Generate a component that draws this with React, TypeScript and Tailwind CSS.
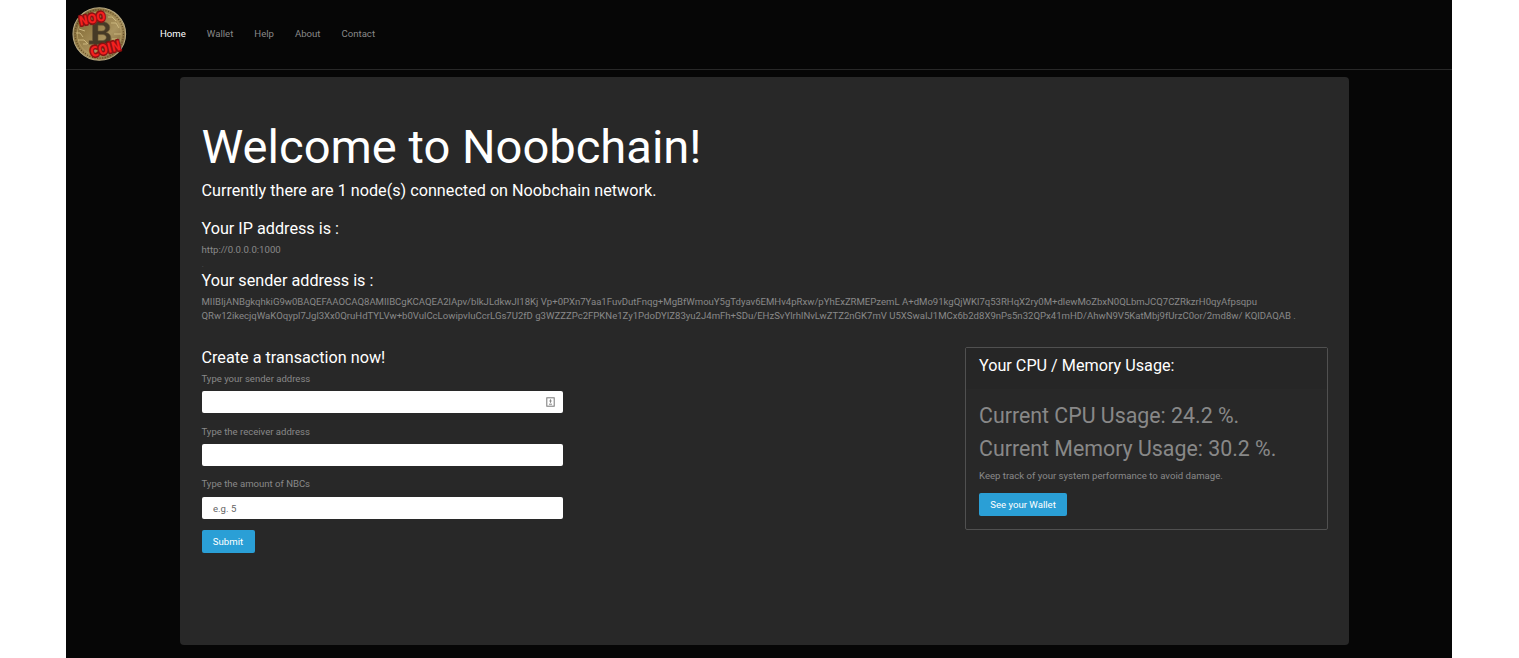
import React from "react";

const links = ["Home", "Wallet", "Help", "About", "Contact"];

function Logo() {
  return (
    <svg width="56" height="56" viewBox="0 0 56 56" overflow="visible" className="block">
      <defs>
        <linearGradient id="coin" x1="0" y1="0" x2="1" y2="1">
          <stop offset="0" stopColor="#6f5a33" />
          <stop offset="0.35" stopColor="#937b45" />
          <stop offset="0.6" stopColor="#aa9460" />
          <stop offset="1" stopColor="#6d5128" />
        </linearGradient>
      </defs>
      <circle cx="28.300" cy="28" r="26.300" fill="url(#coin)" stroke="#b9aa82" strokeWidth="1.1" />
      <circle cx="28.300" cy="28" r="22" fill="none" stroke="#b8a066" strokeWidth="0.8" />
      <circle cx="28.300" cy="28" r="24.2" fill="none" stroke="#5f4923" strokeWidth="1.2" strokeDasharray="1 1.6" />
      <path d="M5 27h4l3 4M7 34h6l4 4M40 17h5l3 5M43 28h7M41 33h5M12 38h4M37 11h4l4 4M8 23l6 2" fill="none" stroke="#cfbb82" strokeWidth="0.9" />
      <path
        transform="translate(1 -0.500)"
        d="M18 16h4v-4h3.500v4h2.500v-4h3.500v4.200c4 .8 6.300 2.800 6.300 5.900 0 2.400-1.300 4-3.600 4.900 3 .8 4.600 2.800 4.600 5.500 0 3.700-2.600 5.800-7.300 6.200V43H28v-4.300h-2.500V43H22v-4.300h-5v-3.500h3.500V19.500H18zM26 19.700v5.800h4c4.400 0 4.400-5.800 0-5.800zM26 29v6h4.500c5 0 5-6 0-6z"
        fill="#463a26"
        stroke="#6d5b37"
        strokeWidth="0.6"
        fillRule="evenodd"
      />
      <g
        fontFamily="'DejaVu Sans', sans-serif"
        fontWeight="700"
        fill="#f52020"
        stroke="#8d1010"
        strokeWidth="2.600"
        paintOrder="stroke"
        strokeLinejoin="round"
        textAnchor="middle"
      >
        <text fontSize="10.500" transform="translate(22 17) rotate(-12) scale(1 1.200)">NOO</text>
        <text fontSize="11" transform="translate(35.500 47.500) rotate(-14) scale(1 1.250)">COIN</text>
      </g>
    </svg>
  );
}

function Field({ label, placeholder, icon, gap, inputGap }: { label: string; placeholder?: string; icon?: boolean; gap: string; inputGap: string }) {
  return (
    <label className={`block ${gap}`}>
      <span className="block h-[14px] text-[9.55px] leading-[14px]">{label}</span>
      <span className={`relative ml-[0.5px] block h-[22px] w-[361px] ${inputGap}`}>
        <input
          placeholder={placeholder}
          className="block h-full w-full rounded-[2px] bg-white px-[11px] text-[9.6px] text-[#282828] outline-none placeholder:text-[#666]"
        />
        {icon && (
          <svg className="absolute top-[6px] right-[8px]" width="9" height="10" viewBox="0 0 9 10" fill="none">
            <rect x="0.8" y="0.8" width="7.400" height="8.400" stroke="#777" strokeWidth="1" />
            <path d="M4.500 2.300v3.500M3.300 4h2.400M3 7.200h3" stroke="#888" strokeWidth="1" />
          </svg>
        )}
      </span>
    </label>
  );
}

export default function App() {
  return (
    <div className="h-[658px] overflow-hidden bg-white pl-[66px] font-['Roboto',sans-serif] text-[9.6px] text-[#888]">
      <div className="h-full w-[1386px] bg-[#060606]">
        <nav className="flex h-[70px] items-center border-b border-[#282828] pb-[1px] pl-[5px]">
          <Logo />
          <div className="ml-[33px] flex gap-[21px] text-[9.6px] leading-[14px]">
            {links.map((l) => (
              <a key={l} className={l === "Home" ? "text-white" : ""}>{l}</a>
            ))}
          </div>
        </nav>
        <main className="mt-[7px] ml-[114px] h-[568px] w-[1169px] rounded-[4px] bg-[#282828] pr-[21px] pl-[21.5px] pt-[40px]">
          <h1 className="h-[60px] text-[47.1px] leading-[59px] text-white">Welcome to Noobchain!</h1>
          <h4 className="mt-[4px] h-[20px] text-[16.2px] leading-[20px] text-white">
            Currently there are 1 node(s) connected on Noobchain network.
          </h4>
          <h4 className="mt-[18px] h-[20px] text-[16.2px] leading-[20px] text-white">Your IP address is :</h4>
          <p className="mt-[4px] h-[14px] leading-[14px]">http://0.0.0.0:1000</p>
          <p className="h-[14px] leading-[14px] text-[#4c4c4c]">.</p>
          <h4 className="h-[20px] text-[16.2px] leading-[20px] text-white">Your sender address is :</h4>
          <p className="mt-[4px] h-[27px] text-[9.577px] leading-[13.500px] whitespace-nowrap">
            MIIBIjANBgkqhkiG9w0BAQEFAAOCAQ8AMIIBCgKCAQEA2lApv/blkJLdkwJI18Kj Vp+0PXn7Yaa1FuvDutFnqg+MgBfWmouY5gTdyav6EMHv4pRxw/pYhExZRMEPzemL A+dMo91kgQjWKl7q53RHqX2ry0M+dlewMoZbxN0QLbmJCQ7CZRkzrH0qyAfpsqpu
            <br />
            QRw12ikecjqWaKOqypl7Jgl3Xx0QruHdTYLVw+b0VulCcLowipvIuCcrLGs7U2fD g3WZZZPc2FPKNe1Zy1PdoDYIZ83yu2J4mFh+SDu/EHzSvYlrhlNvLwZTZ2nGK7mV U5XSwaIJ1MCx6b2d8X9nPs5n32QPx41mHD/AhwN9V5KatMbj9fUrzC0or/2md8w/ KQIDAQAB .
          </p>
          <div className="mt-[25px] flex justify-between">
            <form>
              <h4 className="h-[20px] text-[16.2px] leading-[21px] text-white">Create a transaction now!</h4>
              <Field label="Type your sender address" icon gap="mt-[5px]" inputGap="mt-[5px]" />
              <Field label="Type the receiver address" gap="mt-[12px]" inputGap="mt-[5px]" />
              <Field label="Type the amount of NBCs" placeholder="e.g. 5" gap="mt-[11px]" inputGap="mt-[6px]" />
              <button type="button" className="mt-[11px] block h-[23px] w-[53px] rounded-[2px] bg-[#2a9fd6] pt-px text-white">Submit</button>
            </form>
            <section className="h-[183px] w-[363px] rounded-[2px] border border-[#505050]">
              <h4 className="h-[41px] bg-[#262626] px-[13px] pt-[8px] text-[16.2px] leading-[20px] text-white">Your CPU / Memory Usage:</h4>
              <div className="px-[13px] pt-[10px]">
                <p className="h-[33px] text-[21.35px] leading-[33px]">Current CPU Usage: 24.2 %.</p>
                <p className="h-[33px] text-[21.35px] leading-[33px]">Current Memory Usage: 30.2 %.</p>
                <p className="mt-[3px] h-[16px] leading-[16px]">Keep track of your system performance to avoid damage.</p>
                <button type="button" className="mt-[9px] block h-[23px] w-[88px] rounded-[2px] bg-[#2a9fd6] pt-px text-white">See your Wallet</button>
              </div>
            </section>
          </div>
        </main>
      </div>
    </div>
  );
}
